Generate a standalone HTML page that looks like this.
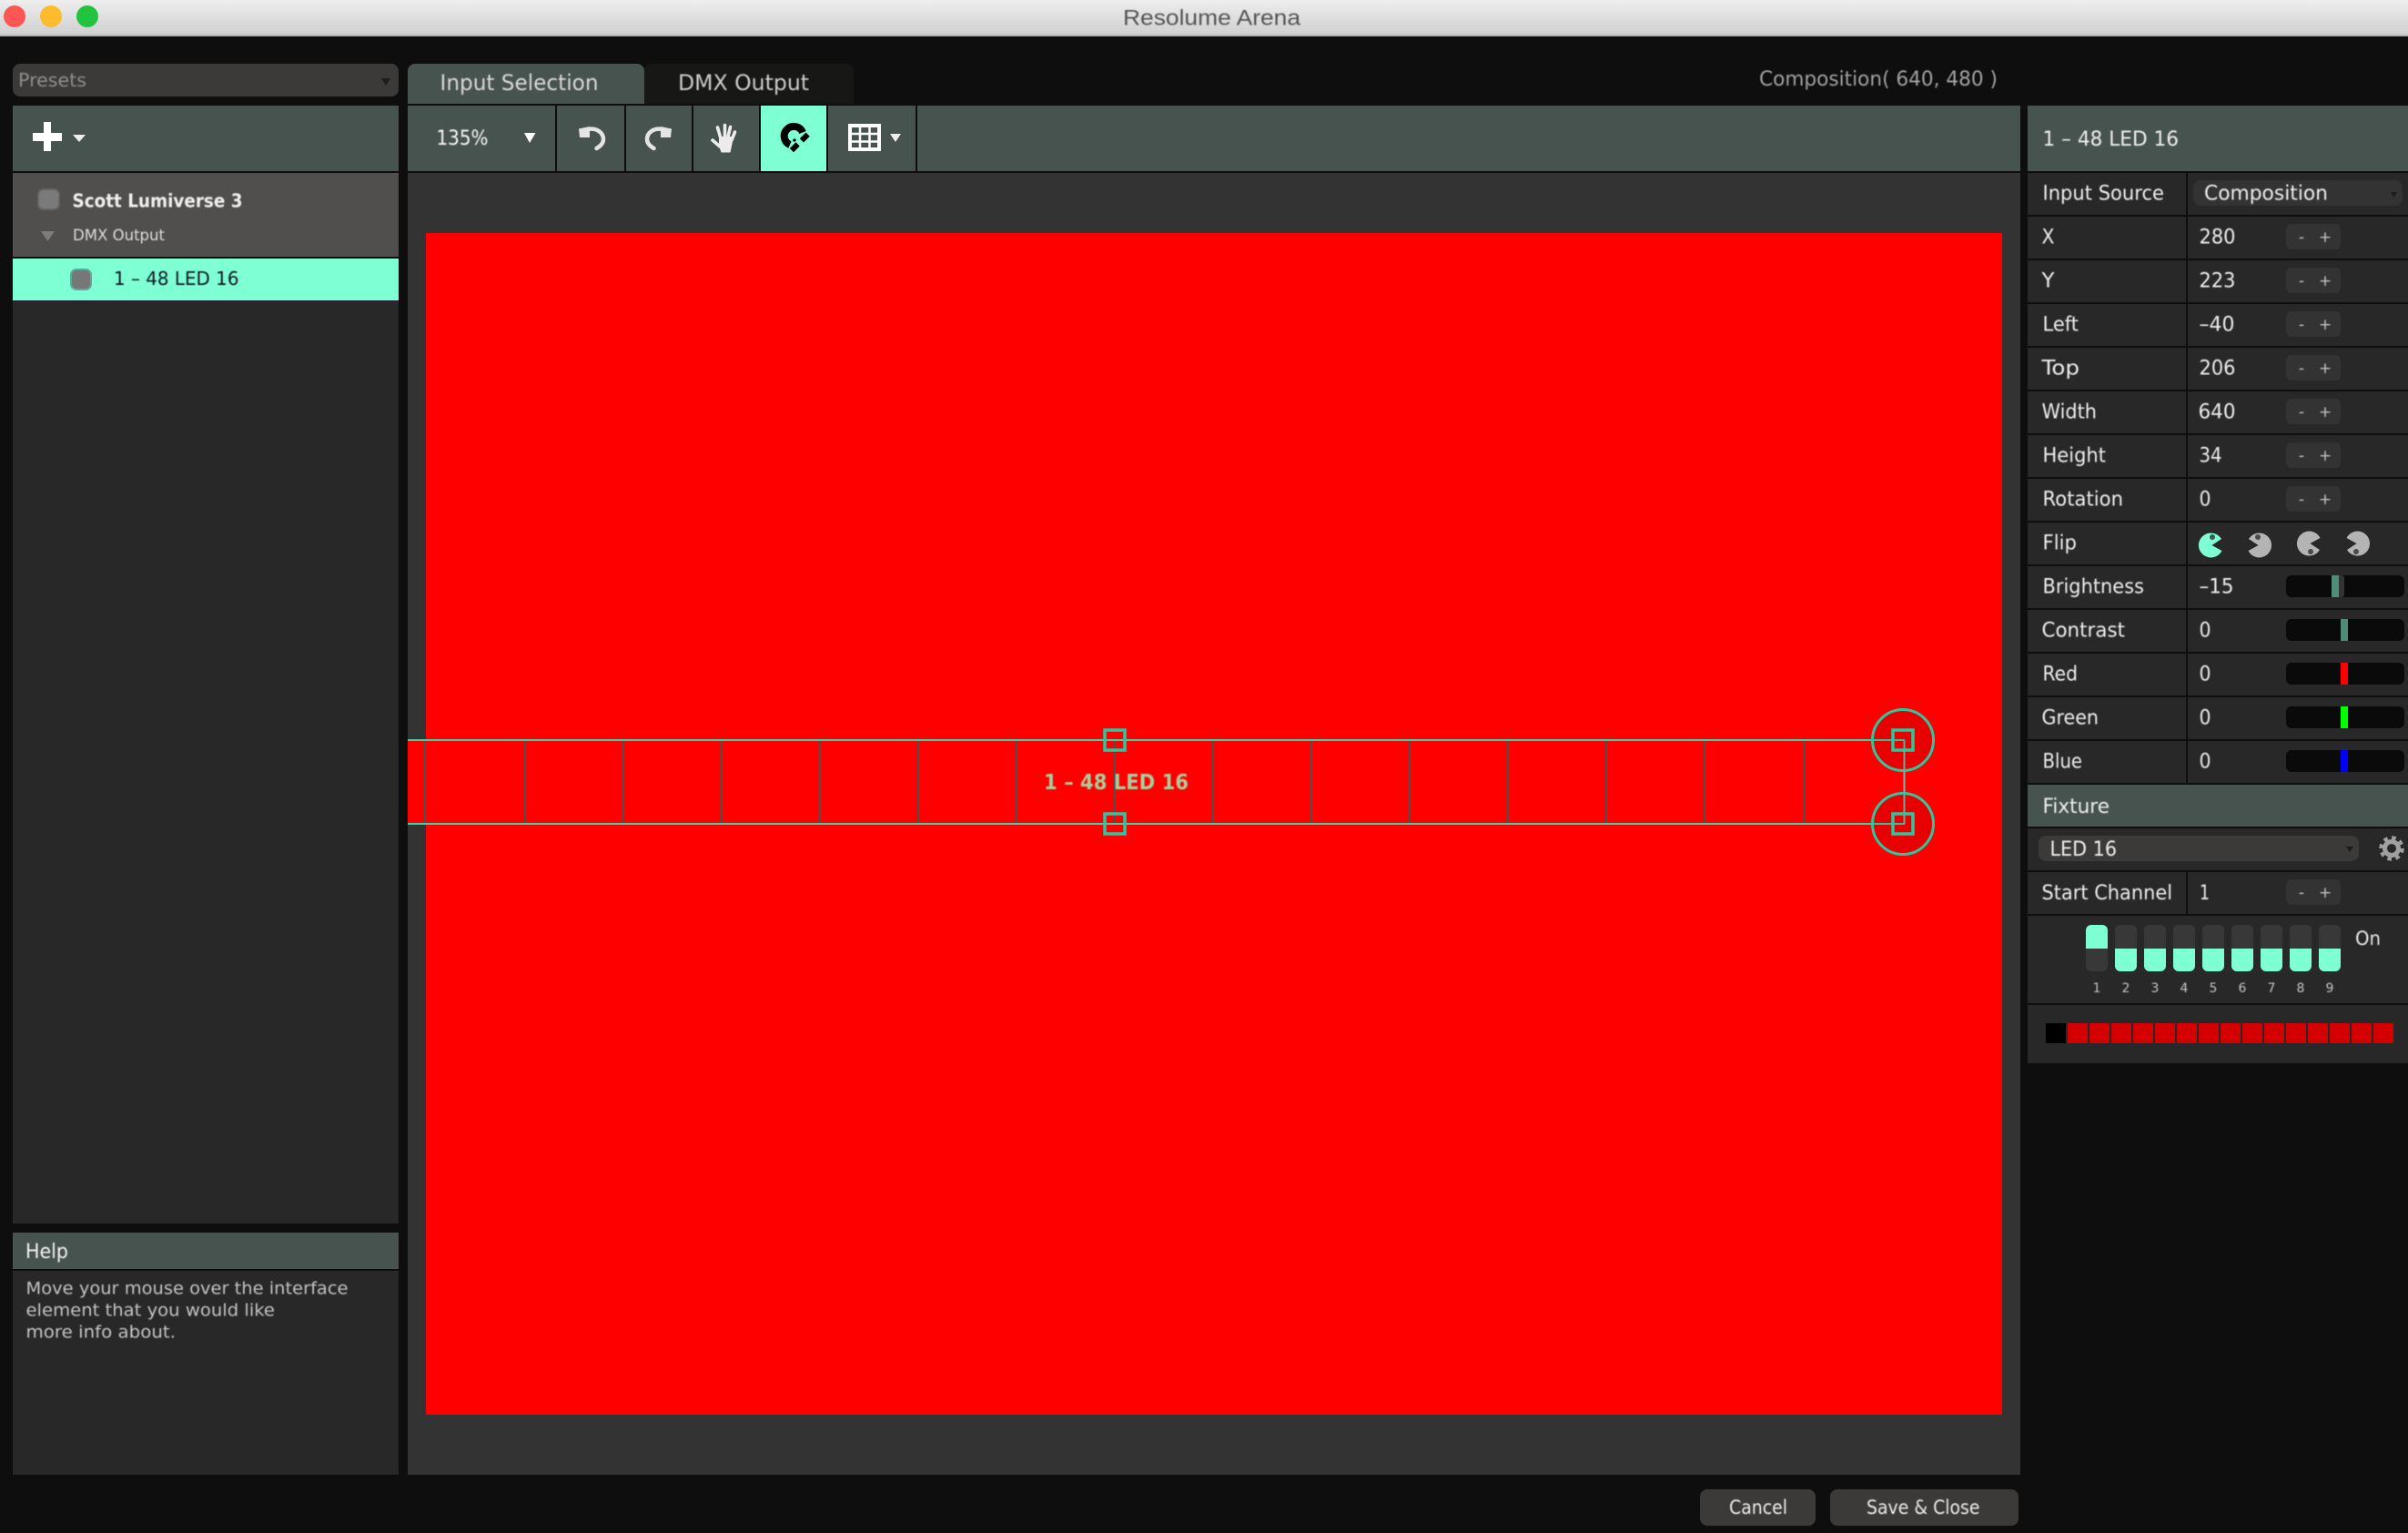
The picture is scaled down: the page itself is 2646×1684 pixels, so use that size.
<!DOCTYPE html>
<html><head><meta charset="utf-8"><title>Resolume Arena</title>
<style>
html,body{margin:0;padding:0;background:#0e0e0e;width:2646px;height:1684px;overflow:hidden}
svg{display:block}
text{font-family:"DejaVu Sans","Liberation Sans",sans-serif;font-size:22px;fill:#e4e4e4}
.l{font-size:22px;fill:#eeeeee}
.s{font-size:19px;fill:#c4c4c4}
.d{font-size:14px;fill:#c4c4c4;text-anchor:middle}
.o{font-size:17px;fill:#c4c4c4;text-anchor:middle}
</style></head><body>
<svg xmlns="http://www.w3.org/2000/svg" width="2646" height="1684" viewBox="0 0 2646 1684">
<defs>
<linearGradient id="tb" x1="0" y1="0" x2="0" y2="1"><stop offset="0" stop-color="#eeeeee"/><stop offset="1" stop-color="#d0d0d0"/></linearGradient>
<filter id="sf" x="0" y="0" width="100%" height="100%"><feGaussianBlur stdDeviation="0.45"/></filter>
</defs>
<rect width="2646" height="1684" fill="#0e0e0e"/>
<!-- title bar -->
<rect width="2646" height="38" fill="url(#tb)"/>
<rect y="38" width="2646" height="2" fill="#b4b4b4"/>
<circle cx="16" cy="18" r="12" fill="#fc5753"/>
<circle cx="56" cy="18" r="12" fill="#fdbc2e"/>
<circle cx="96" cy="18" r="12" fill="#22c33f"/>

<!-- left column -->
<rect x="14" y="70" width="424" height="36" rx="8" fill="#3b3a39"/>
<rect x="14" y="116" width="424" height="72" fill="#47534e"/>
<rect x="14" y="190" width="424" height="92" fill="#504f4e"/>
<rect x="14" y="284" width="424" height="46" fill="#7fffd4"/>
<rect x="14" y="330" width="424" height="1" fill="#1c1c34"/>
<rect x="14" y="331" width="424" height="1013" fill="#282828"/>
<rect x="14" y="1354" width="424" height="40" fill="#47534e"/>
<rect x="14" y="1396" width="424" height="224" fill="#282828"/>
<polygon points="419,86 429,86 424,94" fill="#1e1e1e"/>
<rect x="48" y="134" width="8" height="32" fill="#fff"/><rect x="36" y="146" width="32" height="9" fill="#fff"/>
<polygon points="80,148 94,148 87,156" fill="#eee"/>
<rect x="42" y="208" width="23" height="22" rx="6" fill="#7a7a7a" stroke="#656565" stroke-width="2"/>
<polygon points="45,254 60,254 52.500,265" fill="#7c7c7c"/>
<rect x="78" y="296" width="22" height="22" rx="6" fill="#777" stroke="#5fa898" stroke-width="2"/>

<!-- center -->
<path d="M448 114V78a8 8 0 0 1 8-8H700a8 8 0 0 1 8 8V114Z" fill="#47534e"/>
<path d="M708 114V78a8 8 0 0 1 8-8H930a8 8 0 0 1 8 8V114Z" fill="#171716"/>
<rect x="448" y="116" width="162" height="72" fill="#47534e"/>
<rect x="612" y="116" width="74" height="72" fill="#47534e"/>
<rect x="688" y="116" width="72" height="72" fill="#47534e"/>
<rect x="762" y="116" width="72" height="72" fill="#47534e"/>
<rect x="836" y="116" width="72" height="72" fill="#7fffd4"/>
<rect x="910" y="116" width="96" height="72" fill="#47534e"/>
<rect x="1008" y="116" width="1212" height="72" fill="#47534e"/>
<rect x="448" y="190" width="1772" height="1430" fill="#333333"/>
<rect x="468" y="256" width="1732" height="1298" fill="#ff0000"/>
<rect x="448" y="812" width="20" height="94" fill="#ff0000"/>
<!-- toolbar icons -->
<polygon points="576,146 588.500,146 582,157" fill="#fff"/>
<g fill="none" stroke="#e4e4e4" stroke-width="4.500" stroke-linecap="round">
<path d="M646 142C656 140 663 146 663 153C663 158 659 161 655.500 163"/>
<path d="M728 142C718 140 711 146 711 153C711 158 715 161 718.500 163"/>
</g>
<polygon points="636,141.500 648,139 648,151 637,151" fill="#e4e4e4"/>
<polygon points="738,141.500 726,139 726,151 737,151" fill="#e4e4e4"/>
<g stroke="#ececec" stroke-width="3.600" stroke-linecap="round" fill="none">
<path d="M792 152L788.500 140"/><path d="M796.500 150L796.500 137.500"/><path d="M800 150L802.500 139.500"/><path d="M804 154L807.500 145"/><path d="M791 161L783 154"/>
</g>
<polygon points="790,150 806,150 804.500,158 802.500,167.500 792.500,167.500 790,160" fill="#ececec"/>
<path d="M882 145.500A10.500 10.500 0 1 0 868 159" fill="none" stroke="#000" stroke-width="8"/>
<rect x="879.500" y="148" width="9.500" height="6" transform="rotate(-45 884.300 151)" fill="#000"/>
<rect x="868.500" y="158.700" width="9.500" height="6" transform="rotate(-45 873.300 161.700)" fill="#000"/>
<rect x="871.500" y="152.500" width="3" height="3" transform="rotate(45 873 154)" fill="#000"/>
<g fill="none" stroke="#fff">
<rect x="934" y="138" width="32" height="26" stroke-width="4"/>
<path d="M945 138V164M955.500 138V164M934 147H966M934 155.500H966" stroke-width="2.500"/>
</g>
<polygon points="978,147 990,147 984,156" fill="#eee"/>

<!-- mapping overlay -->
<g fill="#47534e">
<rect x="466" y="813" width="2" height="92"/><rect x="576" y="813" width="2" height="92"/><rect x="684" y="813" width="2" height="92"/><rect x="792" y="813" width="2" height="92"/><rect x="900" y="813" width="2" height="92"/><rect x="1008" y="813" width="2" height="92"/><rect x="1116" y="813" width="2" height="92"/><rect x="1224" y="813" width="2" height="92"/><rect x="1332" y="813" width="2" height="92"/><rect x="1440" y="813" width="2" height="92"/><rect x="1548" y="813" width="2" height="92"/><rect x="1656" y="813" width="2" height="92"/><rect x="1764" y="813" width="2" height="92"/><rect x="1872" y="813" width="2" height="92"/><rect x="1982" y="813" width="2" height="92"/>
</g>
<rect x="448" y="812" width="1645" height="2" fill="#35d6a8"/>
<rect x="448" y="904" width="1645" height="2" fill="#35d6a8"/>
<rect x="2091.500" y="813" width="2" height="92" fill="#7fb8a2"/>
<g fill="rgba(0,0,0,.09)" stroke="#2bc8a0" stroke-width="3">
<circle cx="2091" cy="813" r="33.500"/><circle cx="2091" cy="905" r="33.500"/>
</g>
<g fill="none" stroke="#2bc8a0" stroke-width="3.500">
<rect x="2080" y="802" width="22" height="22"/><rect x="2080" y="894" width="22" height="22"/>
<rect x="1214" y="802" width="22" height="22"/><rect x="1214" y="894" width="22" height="22"/>
</g>

<!-- bottom buttons -->
<rect x="1868" y="1636" width="127" height="40" rx="8" fill="#3b3a39"/>
<rect x="2011" y="1636" width="207" height="40" rx="8" fill="#3b3a39"/>

<!-- right panel -->
<rect x="2228" y="116" width="418" height="72" fill="#47534e"/>
<g fill="#282828">
<rect x="2228" y="190" width="174" height="46"/><rect x="2404" y="190" width="242" height="46"/>
<rect x="2228" y="238" width="174" height="46"/><rect x="2404" y="238" width="242" height="46"/>
<rect x="2228" y="286" width="174" height="46"/><rect x="2404" y="286" width="242" height="46"/>
<rect x="2228" y="334" width="174" height="46"/><rect x="2404" y="334" width="242" height="46"/>
<rect x="2228" y="382" width="174" height="46"/><rect x="2404" y="382" width="242" height="46"/>
<rect x="2228" y="430" width="174" height="46"/><rect x="2404" y="430" width="242" height="46"/>
<rect x="2228" y="478" width="174" height="46"/><rect x="2404" y="478" width="242" height="46"/>
<rect x="2228" y="526" width="174" height="46"/><rect x="2404" y="526" width="242" height="46"/>
<rect x="2228" y="574" width="174" height="46"/><rect x="2404" y="574" width="242" height="46"/>
<rect x="2228" y="622" width="174" height="46"/><rect x="2404" y="622" width="242" height="46"/>
<rect x="2228" y="670" width="174" height="46"/><rect x="2404" y="670" width="242" height="46"/>
<rect x="2228" y="718" width="174" height="46"/><rect x="2404" y="718" width="242" height="46"/>
<rect x="2228" y="766" width="174" height="46"/><rect x="2404" y="766" width="242" height="46"/>
<rect x="2228" y="814" width="174" height="46"/><rect x="2404" y="814" width="242" height="46"/>
<rect x="2228" y="910" width="418" height="46"/>
<rect x="2228" y="958" width="174" height="46"/><rect x="2404" y="958" width="242" height="46"/>
<rect x="2228" y="1006" width="418" height="96"/>
<rect x="2228" y="1104" width="418" height="64"/>
</g>
<rect x="2228" y="862" width="418" height="46" fill="#47534e"/>
<rect x="2410" y="198" width="230" height="28" rx="8" fill="#333"/>
<polygon points="2627,211 2634,211 2630.500,217" fill="#1c1c1c"/>
<g fill="#333">
<rect x="2512" y="246" width="60" height="28" rx="6"/><rect x="2512" y="294" width="60" height="28" rx="6"/><rect x="2512" y="342" width="60" height="28" rx="6"/><rect x="2512" y="390" width="60" height="28" rx="6"/><rect x="2512" y="438" width="60" height="28" rx="6"/><rect x="2512" y="486" width="60" height="28" rx="6"/><rect x="2512" y="534" width="60" height="28" rx="6"/><rect x="2512" y="966" width="60" height="28" rx="6"/>
</g>
<!-- flip pacmen -->
<g>
<path d="M2441 592L2430.500 599L2441.500 605A13.500 13.500 0 1 1 2441 592Z" fill="#7fffd4"/>
<circle cx="2431" cy="590" r="3" fill="#3a5a50"/>
<path d="M2471 592L2481.500 599L2470.500 605A13.500 13.500 0 1 0 2471 592Z" fill="#b4b4b4"/>
<circle cx="2481" cy="590" r="3" fill="#4a4a4a"/>
<path d="M2549 604L2538.500 597L2549.500 591A13.500 13.500 0 1 0 2549 604Z" fill="#b4b4b4"/>
<circle cx="2539" cy="606" r="3" fill="#4a4a4a"/>
<path d="M2579 604L2589.500 597L2578.500 591A13.500 13.500 0 1 1 2579 604Z" fill="#b4b4b4"/>
<circle cx="2589" cy="606" r="3" fill="#4a4a4a"/>
</g>
<!-- sliders -->
<g fill="#0a0a0a">
<rect x="2512" y="632" width="130" height="24" rx="6"/><rect x="2512" y="680" width="130" height="24" rx="6"/><rect x="2512" y="728" width="130" height="24" rx="6"/><rect x="2512" y="776" width="130" height="24" rx="6"/><rect x="2512" y="824" width="130" height="24" rx="6"/>
</g>
<rect x="2566" y="632" width="10" height="24" rx="3" fill="#333"/>
<rect x="2562" y="632" width="8" height="24" fill="#4e8c78"/>
<rect x="2572" y="680" width="8" height="24" fill="#4e8c78"/>
<rect x="2572" y="728" width="8" height="24" fill="#ff0000"/>
<rect x="2572" y="776" width="8" height="24" fill="#00ff00"/>
<rect x="2572" y="824" width="8" height="24" fill="#0000ff"/>
<!-- fixture -->
<rect x="2240" y="918" width="352" height="28" rx="8" fill="#3b3a39"/>
<polygon points="2578,930 2586,930 2582,936" fill="#1c1c1c"/>
<circle cx="2628" cy="932" r="11.500" fill="none" stroke="#a0a0a0" stroke-width="4.500" stroke-dasharray="4.500 4.500"/>
<circle cx="2628" cy="932" r="7.500" fill="none" stroke="#a0a0a0" stroke-width="5"/>
<!-- dip -->
<g fill="#383838">
<rect x="2292" y="1016" width="24" height="51" rx="6"/><rect x="2324" y="1016" width="24" height="51" rx="6"/><rect x="2356" y="1016" width="24" height="51" rx="6"/><rect x="2388" y="1016" width="24" height="51" rx="6"/><rect x="2420" y="1016" width="24" height="51" rx="6"/><rect x="2452" y="1016" width="24" height="51" rx="6"/><rect x="2484" y="1016" width="24" height="51" rx="6"/><rect x="2516" y="1016" width="24" height="51" rx="6"/><rect x="2548" y="1016" width="24" height="51" rx="6"/>
</g>
<g fill="#7fffd4">
<path d="M2292 1042V1022a6 6 0 0 1 6-6h12a6 6 0 0 1 6 6V1042Z"/>
<path d="M2324 1042V1061a6 6 0 0 0 6 6h12a6 6 0 0 0 6-6V1042Z"/>
<path d="M2356 1042V1061a6 6 0 0 0 6 6h12a6 6 0 0 0 6-6V1042Z"/>
<path d="M2388 1042V1061a6 6 0 0 0 6 6h12a6 6 0 0 0 6-6V1042Z"/>
<path d="M2420 1042V1061a6 6 0 0 0 6 6h12a6 6 0 0 0 6-6V1042Z"/>
<path d="M2452 1042V1061a6 6 0 0 0 6 6h12a6 6 0 0 0 6-6V1042Z"/>
<path d="M2484 1042V1061a6 6 0 0 0 6 6h12a6 6 0 0 0 6-6V1042Z"/>
<path d="M2516 1042V1061a6 6 0 0 0 6 6h12a6 6 0 0 0 6-6V1042Z"/>
<path d="M2548 1042V1061a6 6 0 0 0 6 6h12a6 6 0 0 0 6-6V1042Z"/>
</g>
<rect x="2248" y="1124" width="22" height="22" fill="#000"/>
<g fill="#d40000">
<rect x="2272" y="1124" width="22" height="22"/><rect x="2296" y="1124" width="22" height="22"/><rect x="2320" y="1124" width="22" height="22"/><rect x="2344" y="1124" width="22" height="22"/><rect x="2368" y="1124" width="22" height="22"/><rect x="2392" y="1124" width="22" height="22"/><rect x="2416" y="1124" width="22" height="22"/><rect x="2440" y="1124" width="22" height="22"/><rect x="2464" y="1124" width="22" height="22"/><rect x="2488" y="1124" width="22" height="22"/><rect x="2512" y="1124" width="22" height="22"/><rect x="2536" y="1124" width="22" height="22"/><rect x="2560" y="1124" width="22" height="22"/><rect x="2584" y="1124" width="22" height="22"/><rect x="2608" y="1124" width="22" height="22"/>
</g>

<!-- all text -->
<g filter="url(#sf)">
<text x="1234" y="27.500" textLength="195" lengthAdjust="spacingAndGlyphs" style="font-family:'Liberation Sans',sans-serif;font-size:24px;fill:#555555">Resolume Arena</text>
<text x="20" y="95" textLength="75" lengthAdjust="spacingAndGlyphs" style="font-size:20px;fill:#8e8e8e">Presets</text>
<text x="79.500" y="227.500" textLength="187" lengthAdjust="spacingAndGlyphs" style="font-size:20px;font-weight:bold;fill:#efefef">Scott Lumiverse 3</text>
<text x="80" y="264" textLength="101" lengthAdjust="spacingAndGlyphs" style="font-size:17px;fill:#dcdcdc">DMX Output</text>
<text x="125" y="313" textLength="137.500" lengthAdjust="spacingAndGlyphs" style="font-size:20px;fill:#101820">1 – 48 LED 16</text>
<text x="483.500" y="99" textLength="174" lengthAdjust="spacingAndGlyphs" style="font-size:24px;fill:#d8d8d8">Input Selection</text>
<text x="745" y="99" textLength="144" lengthAdjust="spacingAndGlyphs" style="font-size:24px;fill:#cccccc">DMX Output</text>
<text x="479.500" y="159" textLength="57" lengthAdjust="spacingAndGlyphs" style="font-size:22px;fill:#f8f8f8">135%</text>
<text x="1933" y="94" textLength="262" lengthAdjust="spacingAndGlyphs" style="font-size:22px;fill:#a2a2a2">Composition( 640, 480 )</text>
<text x="28" y="1382" textLength="47" lengthAdjust="spacingAndGlyphs" style="font-size:22px;fill:#f4f4f4">Help</text>
<text class="s" x="28.500" y="1421.500" textLength="354" lengthAdjust="spacingAndGlyphs">Move your mouse over the interface</text>
<text class="s" x="28.500" y="1445.500" textLength="273.500" lengthAdjust="spacingAndGlyphs">element that you would like</text>
<text class="s" x="28.500" y="1469.500" textLength="164.500" lengthAdjust="spacingAndGlyphs">more info about.</text>
<text x="1147" y="867" textLength="159" lengthAdjust="spacingAndGlyphs" style="font-size:23px;font-weight:bold;fill:#a6cf9c">1 – 48 LED 16</text>
<text x="1900" y="1663" textLength="64" lengthAdjust="spacingAndGlyphs" style="font-size:21px;fill:#ececec">Cancel</text>
<text x="2051" y="1663" textLength="124.500" lengthAdjust="spacingAndGlyphs" style="font-size:21px;fill:#ececec">Save &amp; Close</text>

<text class="l" x="2244.500" y="160" textLength="149.500" lengthAdjust="spacingAndGlyphs">1 – 48 LED 16</text>
<text class="l" x="2244.500" y="219.500" textLength="133.500" lengthAdjust="spacingAndGlyphs">Input Source</text>
<text class="l" x="2422" y="219.500" textLength="136" lengthAdjust="spacingAndGlyphs">Composition</text>
<text class="l" x="2243.500" y="267.500" textLength="14" lengthAdjust="spacingAndGlyphs">X</text>
<text class="l" x="2243.500" y="315.500" textLength="14" lengthAdjust="spacingAndGlyphs">Y</text>
<text class="l" x="2244.500" y="363.500" textLength="39.500" lengthAdjust="spacingAndGlyphs">Left</text>
<text class="l" x="2243.500" y="411.500" textLength="41.500" lengthAdjust="spacingAndGlyphs">Top</text>
<text class="l" x="2243.500" y="459.500" textLength="60.500" lengthAdjust="spacingAndGlyphs">Width</text>
<text class="l" x="2244.500" y="507.500" textLength="69.500" lengthAdjust="spacingAndGlyphs">Height</text>
<text class="l" x="2244.500" y="555.500" textLength="88.500" lengthAdjust="spacingAndGlyphs">Rotation</text>
<text class="l" x="2244.500" y="603.500" textLength="37.500" lengthAdjust="spacingAndGlyphs">Flip</text>
<text class="l" x="2244.500" y="651.500" textLength="111.500" lengthAdjust="spacingAndGlyphs">Brightness</text>
<text class="l" x="2243.500" y="699.500" textLength="91.500" lengthAdjust="spacingAndGlyphs">Contrast</text>
<text class="l" x="2244.500" y="747.500" textLength="38.500" lengthAdjust="spacingAndGlyphs">Red</text>
<text class="l" x="2243.500" y="795.500" textLength="62.500" lengthAdjust="spacingAndGlyphs">Green</text>
<text class="l" x="2244.500" y="843.500" textLength="43.500" lengthAdjust="spacingAndGlyphs">Blue</text>
<text class="l" x="2244.500" y="893" textLength="73.500" lengthAdjust="spacingAndGlyphs">Fixture</text>
<text class="l" x="2252.500" y="940" textLength="73.500" lengthAdjust="spacingAndGlyphs">LED 16</text>
<text class="l" x="2243.500" y="988" textLength="143.500" lengthAdjust="spacingAndGlyphs">Start Channel</text>

<text class="l" x="2416.500" y="267.500" textLength="40" lengthAdjust="spacingAndGlyphs">280</text>
<text class="l" x="2416.500" y="315.500" textLength="40" lengthAdjust="spacingAndGlyphs">223</text>
<text class="l" x="2416.500" y="363.500" textLength="39" lengthAdjust="spacingAndGlyphs">–40</text>
<text class="l" x="2416.500" y="411.500" textLength="40" lengthAdjust="spacingAndGlyphs">206</text>
<text class="l" x="2415.500" y="459.500" textLength="41" lengthAdjust="spacingAndGlyphs">640</text>
<text class="l" x="2416.500" y="507.500" textLength="25" lengthAdjust="spacingAndGlyphs">34</text>
<text class="l" x="2416.500" y="555.500" textLength="13" lengthAdjust="spacingAndGlyphs">0</text>
<text class="l" x="2416.500" y="651.500" textLength="38" lengthAdjust="spacingAndGlyphs">–15</text>
<text class="l" x="2416.500" y="699.500" textLength="13" lengthAdjust="spacingAndGlyphs">0</text>
<text class="l" x="2416.500" y="747.500" textLength="13" lengthAdjust="spacingAndGlyphs">0</text>
<text class="l" x="2416.500" y="795.500" textLength="13" lengthAdjust="spacingAndGlyphs">0</text>
<text class="l" x="2416.500" y="843.500" textLength="13" lengthAdjust="spacingAndGlyphs">0</text>
<text class="l" x="2417" y="988" textLength="11" lengthAdjust="spacingAndGlyphs">1</text>

<text class="o" x="2529" y="266">-</text><text class="o" x="2555" y="266">+</text>
<text class="o" x="2529" y="314">-</text><text class="o" x="2555" y="314">+</text>
<text class="o" x="2529" y="362">-</text><text class="o" x="2555" y="362">+</text>
<text class="o" x="2529" y="410">-</text><text class="o" x="2555" y="410">+</text>
<text class="o" x="2529" y="458">-</text><text class="o" x="2555" y="458">+</text>
<text class="o" x="2529" y="506">-</text><text class="o" x="2555" y="506">+</text>
<text class="o" x="2529" y="554">-</text><text class="o" x="2555" y="554">+</text>
<text class="o" x="2529" y="986">-</text><text class="o" x="2555" y="986">+</text>

<text class="d" x="2304" y="1090">1</text><text class="d" x="2336" y="1090">2</text><text class="d" x="2368" y="1090">3</text><text class="d" x="2400" y="1090">4</text><text class="d" x="2432" y="1090">5</text><text class="d" x="2464" y="1090">6</text><text class="d" x="2496" y="1090">7</text><text class="d" x="2528" y="1090">8</text><text class="d" x="2560" y="1090">9</text>
<text x="2588" y="1038" textLength="28" lengthAdjust="spacingAndGlyphs" style="font-size:21px;fill:#e6e6e6">On</text>
</g>
</svg>
</body></html>
